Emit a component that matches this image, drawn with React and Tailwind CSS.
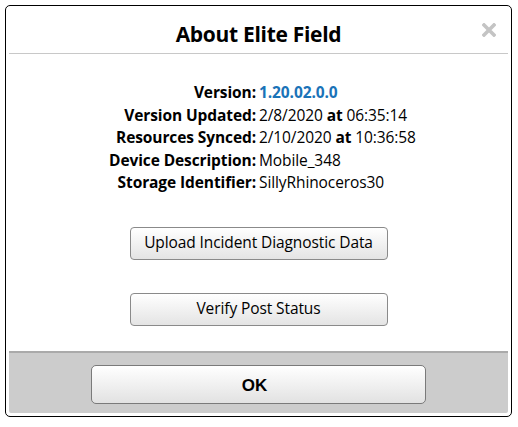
import React from 'react';

const rows = [
  { label: 'Version:', value: <span className="font-bold text-[#1a73b8]">1.20.02.0.0</span> },
  { label: 'Version Updated:', value: <>2/8/2020 <b>at</b> 06:35:14</> },
  { label: 'Resources Synced:', value: <>2/10/2020 <b>at</b> 10:36:58</> },
  { label: 'Device Description:', value: 'Mobile_348' },
  { label: 'Storage Identifier:', value: 'SillyRhinoceros30' },
];

function CloseIcon() {
  return (
    <svg width="14" height="14" viewBox="0 0 14 14">
      <path d="M2 2 L12 12 M12 2 L2 12" stroke="#c4c4c4" strokeWidth="3.6" strokeLinecap="square" />
    </svg>
  );
}

export default function App() {
  return (
    <div className="bg-white w-[518px] h-[427px] pt-[5px] pl-[5px] font-['Open_Sans',sans-serif] text-black">
      <div className="w-[507px] h-[412px] border border-black rounded-[5px] p-[3px] flex flex-col">
        {/* Header */}
        <div className="relative h-[45px] shrink-0 flex items-center justify-center pt-[8px] border-b border-[#c8c8c8]">
          <h1 className="text-[21px] font-bold tracking-[-0.3px]">About Elite Field</h1>
          <button className="absolute right-[12px] top-[14px]">
            <CloseIcon />
          </button>
        </div>

        {/* Body */}
        <div className="flex-1 flex flex-col items-center pt-[27px]">
          <div className="w-full text-[15.5px] leading-[22.5px] tracking-[-0.1px]">
            {rows.map((r) => (
              <div key={r.label} className="flex">
                <div className="w-[247px] text-right font-bold">{r.label}</div>
                <div className="pl-[3px]">{r.value}</div>
              </div>
            ))}
          </div>
          <button className="mt-[33px] w-[258px] h-[33px] border border-[#8a8a8a] rounded-[4px] bg-gradient-to-b from-white to-[#e4e4e4] text-[15.5px] tracking-[-0.1px]">
            Upload Incident Diagnostic Data
          </button>
          <button className="mt-[33px] w-[258px] h-[33px] border border-[#8a8a8a] rounded-[4px] bg-gradient-to-b from-white to-[#e4e4e4] text-[15.5px] tracking-[-0.1px]">
            Verify Post Status
          </button>
        </div>

        {/* Footer */}
        <div className="h-[62px] shrink-0 bg-[#cccccc] border-t-2 border-[#aaaaaa] flex justify-center pt-[12px] rounded-b-[2px]">
          <button className="w-[335px] h-[39px] pr-[8px] pt-[2px] border border-[#7a7a7a] rounded-[5px] bg-gradient-to-b from-white to-[#e2e2e2] font-['Liberation_Sans',Arial,sans-serif] font-bold text-[17px]">
            OK
          </button>
        </div>
      </div>
    </div>
  );
}
